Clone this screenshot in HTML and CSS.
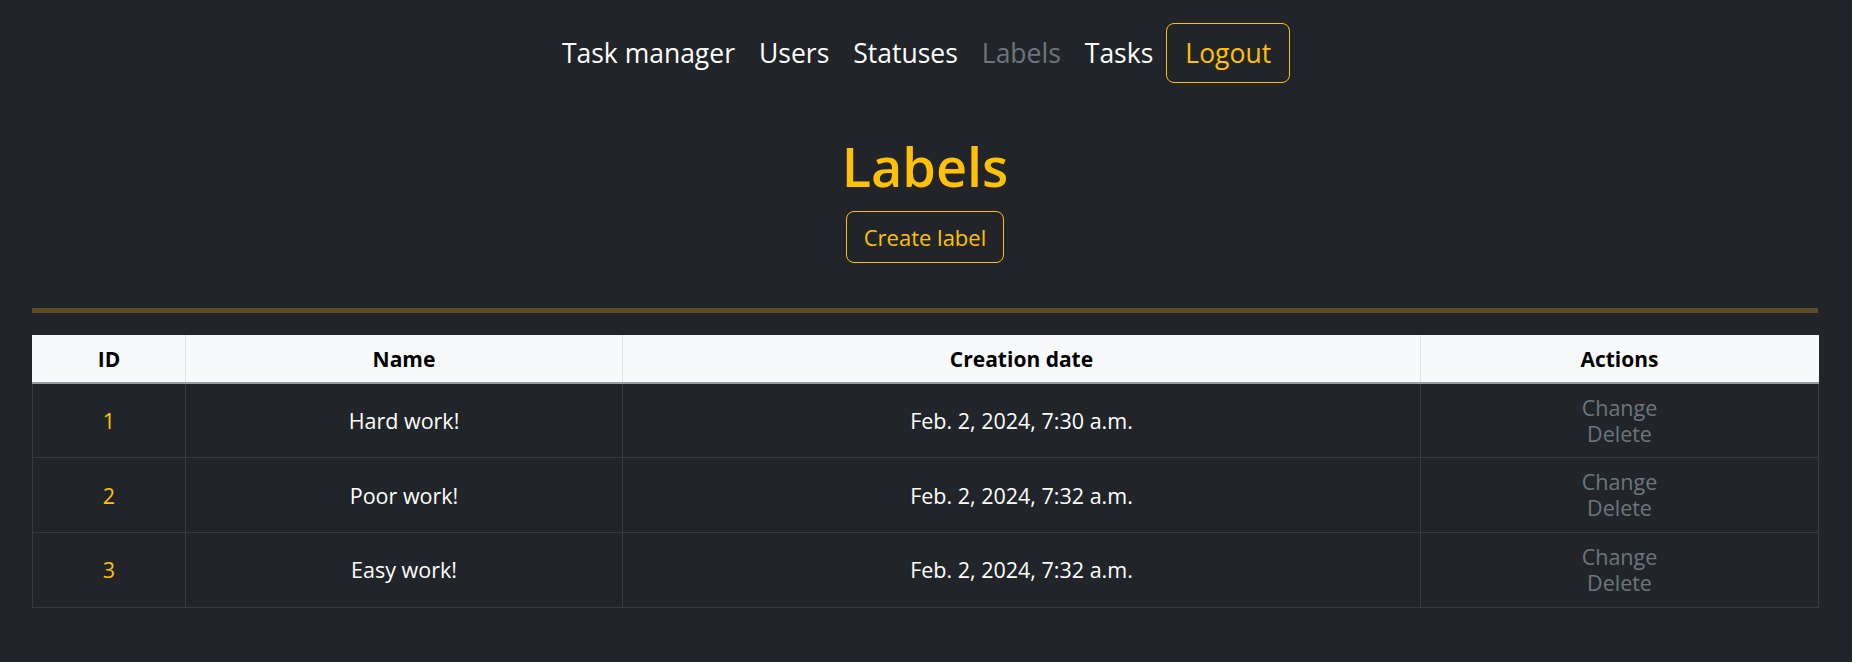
FILE: index.html
```html
<!DOCTYPE html>
<html lang="en">
<head>
<meta charset="utf-8">
<title>Labels</title>
<link rel="stylesheet" href="styles.css">
</head>
<body>
<nav class="topnav">
  <a class="nav-link brand" href="#">Task manager</a>
  <a class="nav-link" href="#">Users</a>
  <a class="nav-link" href="#">Statuses</a>
  <a class="nav-link active" href="#">Labels</a>
  <a class="nav-link" href="#">Tasks</a>
  <a class="btn-logout" href="#">Logout</a>
</nav>
<main class="page">
  <header class="page-head">
    <h1 class="title">Labels</h1>
    <a class="btn-create" href="#">Create label</a>
  </header>
  <hr class="divider">
  <table class="labels">
    <colgroup>
      <col class="c-id"><col class="c-name"><col class="c-date"><col class="c-actions">
    </colgroup>
    <thead>
      <tr><th>ID</th><th>Name</th><th>Creation date</th><th>Actions</th></tr>
    </thead>
    <tbody>
      <tr>
        <td class="id">1</td><td>Hard work!</td><td>Feb. 2, 2024, 7:30 a.m.</td>
        <td class="actions"><a href="#">Change</a><a href="#">Delete</a></td>
      </tr>
      <tr>
        <td class="id">2</td><td>Poor work!</td><td>Feb. 2, 2024, 7:32 a.m.</td>
        <td class="actions"><a href="#">Change</a><a href="#">Delete</a></td>
      </tr>
      <tr>
        <td class="id">3</td><td>Easy work!</td><td>Feb. 2, 2024, 7:32 a.m.</td>
        <td class="actions"><a href="#">Change</a><a href="#">Delete</a></td>
      </tr>
    </tbody>
  </table>
</main>
</body>
</html>
```

FILE: styles.css
```css
* { box-sizing: border-box; }
html, body { margin: 0; padding: 0; }
body {
  background: #212529;
  color: #fff;
  font-family: "Open Sans", "Noto Sans", sans-serif;
  height: 662px;
  overflow: hidden;
}
a { text-decoration: none; }

.topnav {
  display: flex;
  justify-content: center;
  align-items: center;
  padding-top: 23px;
  height: 82px;
}
.nav-link {
  color: #fff;
  font-size: 26.5px;
  padding: 0 12px;
  line-height: 40px;
}
.nav-link.brand { padding-left: 0; }
.nav-link.active { color: #6c757d; }
.btn-logout {
  color: #ffc107;
  font-size: 26.5px;
  line-height: 40px;
  padding: 9px 18px;
  border: 1px solid #ffc107;
  border-radius: 8px;
  margin-left: 1px;
}

.page { padding: 0 34px 0 32px; }
.page-head {
  display: flex;
  flex-direction: column;
  align-items: center;
}
.title {
  margin: 52px 0 0;
  font-size: 54px;
  line-height: 64px;
  font-weight: 600;
  color: #ffc107;
}
.btn-create {
  margin-top: 13px;
  color: #ffc107;
  font-size: 22px;
  line-height: 32px;
  padding: 9px 17px;
  border: 1px solid #ffc107;
  border-radius: 8px;
}
.divider {
  margin: 45px 0 0;
  border: 0;
  height: 5px;
  background: #5d4f23;
}

.labels {
  margin-top: 22px;
  width: 100%;
  border-collapse: collapse;
  table-layout: fixed;
  font-size: 21.5px;
}
.c-id { width: 153px; }
.c-name { width: 437px; }
.c-date { width: 798px; }
.c-actions { width: 398px; }

.labels th {
  background: #f8f9fa;
  color: #000;
  font-weight: 700;
  font-size: 21px;
  height: 48px;
  padding: 0 8px;
  border-left: 1px solid #dee2e6;
  border-right: 1px solid #dee2e6;
  border-bottom: 2px solid #9a9da1;
  text-align: center;
  vertical-align: middle;
}
.labels th:first-child { border-left-color: #f8f9fa; }
.labels th:last-child { border-right-color: #f8f9fa; }
.labels td {
  height: 74.7px;
  padding: 0 8px;
  border: 1px solid #373b3e;
  text-align: center;
  vertical-align: middle;
  color: #fff;
}
.labels td.id { color: #ffc107; }
.actions a {
  display: block;
  color: #6c757d;
  font-size: 21.5px;
  line-height: 26px;
}
```
